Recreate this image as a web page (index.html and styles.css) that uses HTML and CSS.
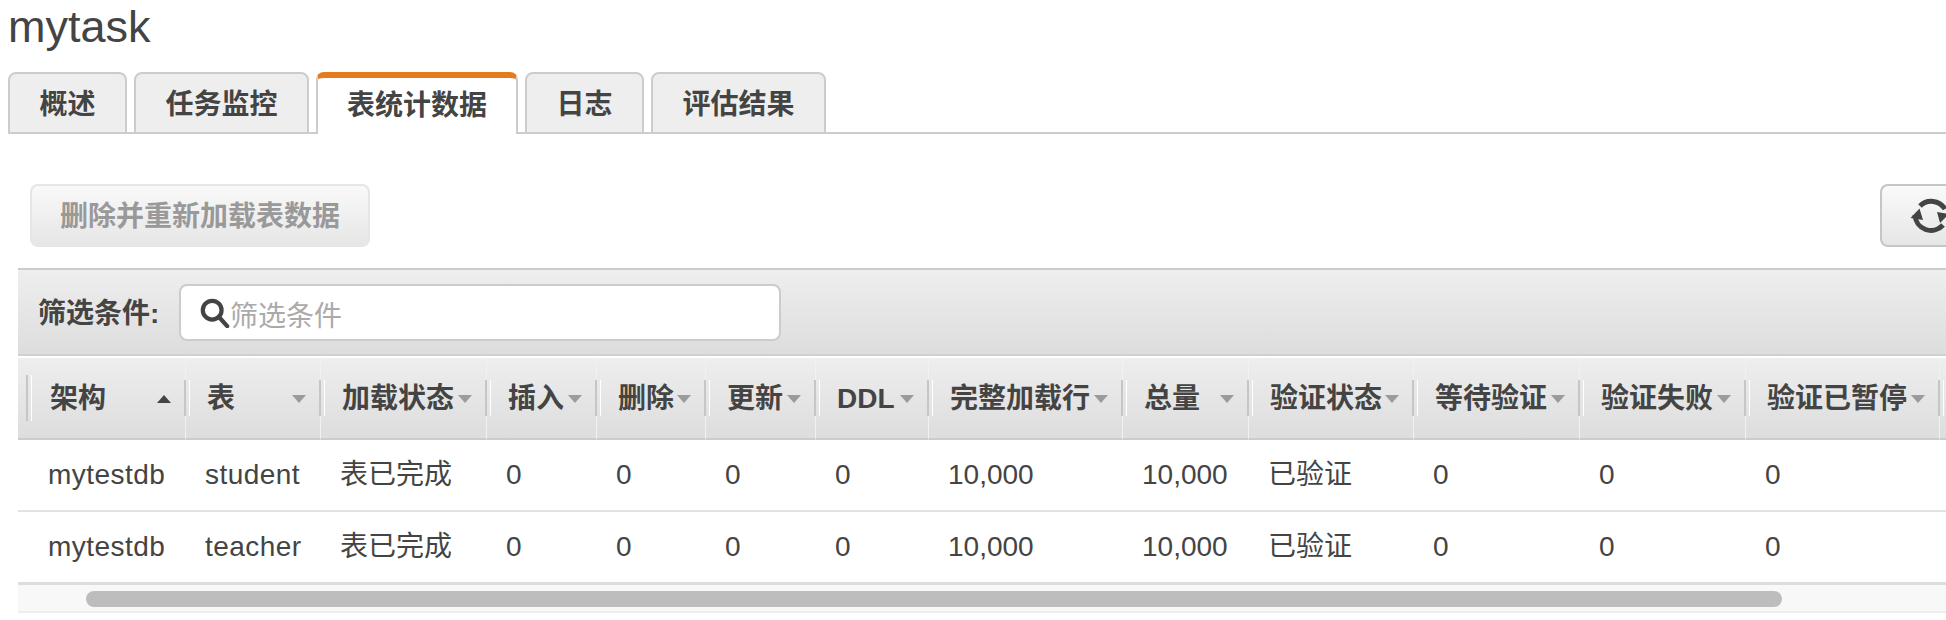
FILE: index.html
```html
<!DOCTYPE html>
<html lang="zh">
<head>
<meta charset="utf-8">
<title>mytask</title>
<link rel="stylesheet" href="styles.css">
</head>
<body>
<h1 class="title">mytask</h1>
<nav class="tabs">
  <a class="tab">概述</a>
  <a class="tab">任务监控</a>
  <a class="tab tab-active">表统计数据</a>
  <a class="tab">日志</a>
  <a class="tab">评估结果</a>
</nav>
<div class="toolbar">
  <button class="btn btn-disabled">删除并重新加载表数据</button>
  <button class="btn btn-refresh" aria-label="刷新">
    <svg class="refresh-icon" viewBox="0 0 44 44" width="44" height="44">
      <path d="M5 21A16 16 0 0 0 33 31M10 12A16 16 0 0 1 35 15" fill="none" stroke="#444" stroke-width="5"/>
      <path d="M0.5 24L9.5 14.5L13 26ZM39 20L30 29L27 18Z" fill="#444"/>
    </svg>
  </button>
</div>
<section class="panel">
  <div class="filter">
    <label class="filter-label">筛选条件:</label>
    <div class="filter-box">
      <svg class="search-icon" viewBox="0 0 32 32" width="30" height="30">
        <circle cx="13" cy="13" r="10" fill="none" stroke="#444" stroke-width="4.5"/>
        <path d="M20 20L29 30" stroke="#444" stroke-width="4.5" stroke-linecap="round"/>
      </svg>
      <input class="filter-input" placeholder="筛选条件">
    </div>
  </div>
  <div class="table-wrap">
    <table class="grid">
      <colgroup>
        <col class="w167"><col class="w135"><col class="w166"><col class="w110"><col class="w109"><col class="w110"><col class="w113"><col class="w194"><col class="w126"><col class="w165"><col class="w166"><col class="w166"><col class="w194"><col class="w200">
      </colgroup>
      <thead>
        <tr>
          <th><div class="th-in">架构<i class="arrow arrow-up"></i></div></th>
          <th><div class="th-in">表<i class="arrow"></i></div></th>
          <th><div class="th-in">加载状态<i class="arrow"></i></div></th>
          <th><div class="th-in">插入<i class="arrow"></i></div></th>
          <th><div class="th-in">删除<i class="arrow"></i></div></th>
          <th><div class="th-in">更新<i class="arrow"></i></div></th>
          <th><div class="th-in">DDL<i class="arrow"></i></div></th>
          <th><div class="th-in">完整加载行<i class="arrow"></i></div></th>
          <th><div class="th-in">总量<i class="arrow"></i></div></th>
          <th><div class="th-in">验证状态<i class="arrow"></i></div></th>
          <th><div class="th-in">等待验证<i class="arrow"></i></div></th>
          <th><div class="th-in">验证失败<i class="arrow"></i></div></th>
          <th><div class="th-in">验证已暂停<i class="arrow"></i></div></th>
          <th></th>
        </tr>
      </thead>
      <tbody>
        <tr><td class="name">mytestdb</td><td class="name">student</td><td>表已完成</td><td>0</td><td>0</td><td>0</td><td>0</td><td>10,000</td><td>10,000</td><td>已验证</td><td>0</td><td>0</td><td>0</td><td></td></tr>
        <tr><td class="name">mytestdb</td><td class="name">teacher</td><td>表已完成</td><td>0</td><td>0</td><td>0</td><td>0</td><td>10,000</td><td>10,000</td><td>已验证</td><td>0</td><td>0</td><td>0</td><td></td></tr>
      </tbody>
    </table>
  </div>
  <div class="scrollbar"><div class="thumb"></div></div>
</section>
</body>
</html>
```
FILE: styles.css
```css
* { box-sizing: border-box; }
html, body { margin: 0; padding: 0; overflow: hidden; background: #fff; }
body {
  width: 1946px;
  height: 620px;
  color: #444;
  font-family: "Liberation Sans", "Noto Sans CJK SC", sans-serif;
  font-size: 28px;
}
.title {
  margin: 0;
  height: 72px;
  padding-left: 8px;
  font-size: 45px;
  font-weight: 400;
  line-height: 54px;
}
.tabs {
  display: flex;
  gap: 7px;
  height: 62px;
  margin-left: 8px;
  border-bottom: 2px solid #ccc;
}
.tab {
  display: flex;
  align-items: center;
  height: 62px;
  padding: 3px 29.5px 0;
  border: 2px solid #ccc;
  border-radius: 8px 8px 0 0;
  background: #eee;
  font-weight: 700;
  line-height: 36px;
}
.tab-active {
  padding: 0 29px 1px;
  border-top: 6px solid #e47c1e;
  border-bottom: 0;
  background: #fff;
}
.toolbar {
  display: flex;
  justify-content: space-between;
  align-items: flex-start;
  padding: 50px 0 0 30px;
  height: 134px;
}
.btn {
  display: flex;
  align-items: center;
  height: 63px;
  margin: 0;
  border-radius: 8px;
  font-family: inherit;
  font-size: 28px;
  font-weight: 700;
  line-height: 36px;
}
.btn-disabled {
  width: 340px;
  padding: 2px 28px 0;
  border: 2px solid #e6e6e6;
  background: linear-gradient(#f9f9f9, #e6e6e6);
  color: #999;
  white-space: nowrap;
}
.btn-refresh {
  width: 66px;
  padding: 0 0 0 28px;
  border: 2px solid #c6c6c6;
  border-right: 0;
  border-radius: 8px 0 0 8px;
  background: linear-gradient(#fafafa, #e6e6e6);
  overflow: hidden;
}
.refresh-icon { flex: none; }
.panel { margin-left: 18px; }
.filter {
  display: flex;
  align-items: flex-start;
  height: 88px;
  padding: 14px 0 0 20px;
  border-top: 2px solid #ccc;
  border-bottom: 2px solid #d0d0d0;
  background: linear-gradient(#eee, #ddd);
}
.filter-label {
  width: 141px;
  margin-top: 12px;
  font-weight: 700;
  line-height: 36px;
  white-space: nowrap;
}
.filter-box {
  display: flex;
  align-items: center;
  gap: 0;
  width: 602px;
  height: 57px;
  padding-left: 19px;
  border: 2px solid #ccc;
  border-radius: 8px;
  background: #fff;
}
.search-icon { flex: none; margin-top: 1px; }
.filter-input {
  flex: 1;
  min-width: 0;
  height: 53px;
  border: 0;
  padding: 9px 0 0;
  outline: 0;
  background: transparent;
  font-family: inherit;
  font-size: 28px;
  color: #444;
}
.filter-input::placeholder { color: #aaa; opacity: 1; }
.table-wrap { margin-top: 2px; overflow: hidden; }
.grid {
  table-layout: fixed;
  width: 2121px;
  border-collapse: separate;
  border-spacing: 0;
}
.w167 { width: 167px; } .w135 { width: 135px; } .w166 { width: 166px; }
.w110 { width: 110px; } .w109 { width: 109px; } .w113 { width: 113px; }
.w194 { width: 194px; } .w126 { width: 126px; } .w165 { width: 165px; }
.w200 { width: 200px; }
.grid th {
  position: relative;
  height: 82px;
  padding: 0;
  border-bottom: 2px solid #ccc;
  border-left: 1px solid #f1f1f1;
  background: linear-gradient(#eee, #ddd);
  font-weight: 700;
  line-height: 36px;
  text-align: left;
}
.grid th::before {
  content: "";
  position: absolute;
  top: 22px;
  left: -2px;
  width: 3px;
  height: 36px;
  border-left: 2px solid #c6c6c6;
  border-right: 1px solid #fff;
}
.grid th:first-child { border-left: 0; }
.grid th:first-child::before { top: 17px; left: 8px; height: 46px; }
.th-in {
  display: flex;
  justify-content: space-between;
  align-items: center;
  padding: 2px 14px 0 21px;
  white-space: nowrap;
}
.grid th:first-child .th-in { padding-left: 32px; }
.arrow {
  flex: none;
  width: 0;
  height: 0;
  border-left: 7px solid transparent;
  border-right: 7px solid transparent;
  border-top: 8px solid #9b9b9b;
}
.arrow-up {
  border-top: 0;
  border-bottom: 8px solid #444;
}
.grid td {
  height: 72px;
  padding: 0 0 0 20px;
  border-bottom: 2px solid #e2e2e2;
  line-height: 36px;
  white-space: nowrap;
}
.grid td:first-child { padding-left: 30px; }
.grid td.name { letter-spacing: 0.45px; }
.grid tr:last-child td { height: 73px; border-bottom: 3px solid #ddd; }
.scrollbar {
  height: 28px;
  padding: 6px 0 0 68px;
  background: #f8f8f8;
  border-bottom: 2px solid #eee;
}
.thumb {
  width: 1696px;
  height: 16px;
  border-radius: 8px;
  background: #bdbdbd;
}
```
